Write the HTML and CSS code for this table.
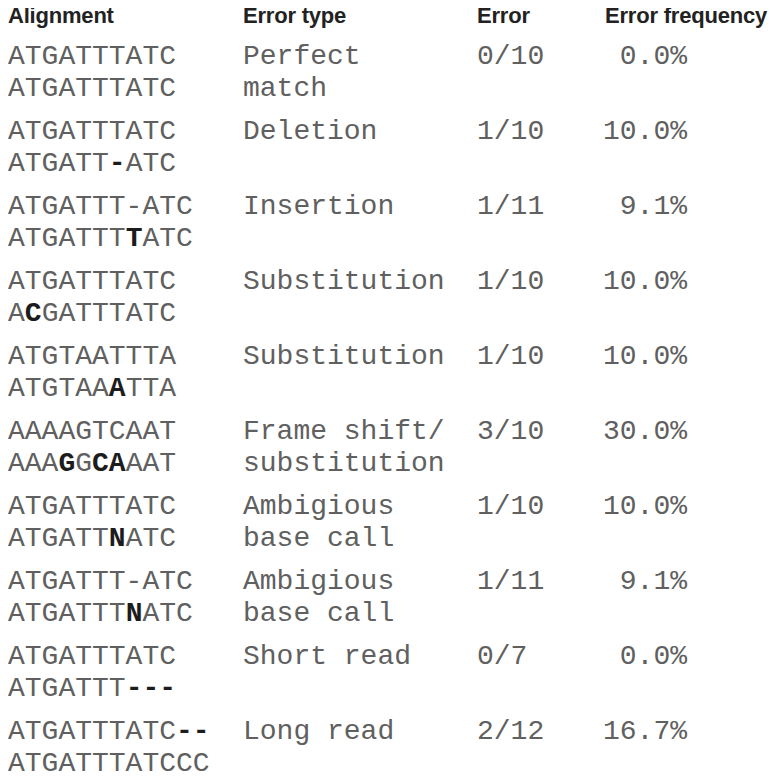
FILE: index.html
```html
<!DOCTYPE html>
<html>
<head>
<meta charset="utf-8">
<link rel="stylesheet" href="styles.css">
</head>
<body>
<div class="table">
  <div class="th">Alignment</div>
  <div class="th">Error type</div>
  <div class="th">Error</div>
  <div class="th">Error frequency</div>

  <div class="seq">ATGATTTATC<br>ATGATTTATC</div>
  <div class="type">Perfect<br>match</div>
  <div class="err">0/10</div>
  <div class="freq">0.0%</div>

  <div class="seq">ATGATTTATC<br>ATGATT<b>-</b>ATC</div>
  <div class="type">Deletion</div>
  <div class="err">1/10</div>
  <div class="freq">10.0%</div>

  <div class="seq">ATGATTT-ATC<br>ATGATTT<b>T</b>ATC</div>
  <div class="type">Insertion</div>
  <div class="err">1/11</div>
  <div class="freq">9.1%</div>

  <div class="seq">ATGATTTATC<br>A<b>C</b>GATTTATC</div>
  <div class="type">Substitution</div>
  <div class="err">1/10</div>
  <div class="freq">10.0%</div>

  <div class="seq">ATGTAATTTA<br>ATGTAA<b>A</b>TTA</div>
  <div class="type">Substitution</div>
  <div class="err">1/10</div>
  <div class="freq">10.0%</div>

  <div class="seq">AAAAGTCAAT<br>AAA<b>G</b>G<b>CA</b>AAT</div>
  <div class="type">Frame shift/<br>substitution</div>
  <div class="err">3/10</div>
  <div class="freq">30.0%</div>

  <div class="seq">ATGATTTATC<br>ATGATT<b>N</b>ATC</div>
  <div class="type">Ambigious<br>base call</div>
  <div class="err">1/10</div>
  <div class="freq">10.0%</div>

  <div class="seq">ATGATTT-ATC<br>ATGATTT<b>N</b>ATC</div>
  <div class="type">Ambigious<br>base call</div>
  <div class="err">1/11</div>
  <div class="freq">9.1%</div>

  <div class="seq">ATGATTTATC<br>ATGATTT<b>---</b></div>
  <div class="type">Short read</div>
  <div class="err">0/7</div>
  <div class="freq">0.0%</div>

  <div class="seq">ATGATTTATC<b>--</b><br>ATGATTTATCCC</div>
  <div class="type">Long read</div>
  <div class="err">2/12</div>
  <div class="freq">16.7%</div>
</div>
</body>
</html>
```

FILE: styles.css
```css
html, body {
  background: #ffffff;
}
body {
  margin: 8px 0 0 8px;
}
.table {
  display: grid;
  grid-template-columns: 235px 234px 128px 169px;
  row-gap: 11px;
  font-family: "Liberation Mono", "Courier New", monospace;
  font-size: 28px;
  line-height: 32px;
  color: #606060;
}
.th {
  font-family: "Liberation Sans", Arial, sans-serif;
  font-weight: bold;
  font-size: 22px;
  letter-spacing: -0.2px;
  line-height: 16px;
  color: #222222;
  padding-bottom: 6px;
  white-space: nowrap;
}
.seq, .type, .err, .freq {
  white-space: nowrap;
}
.seq b {
  font-weight: bold;
  color: #1c1c1c;
}
.freq {
  width: 82px;
  display: flex;
  justify-content: flex-end;
}
```
